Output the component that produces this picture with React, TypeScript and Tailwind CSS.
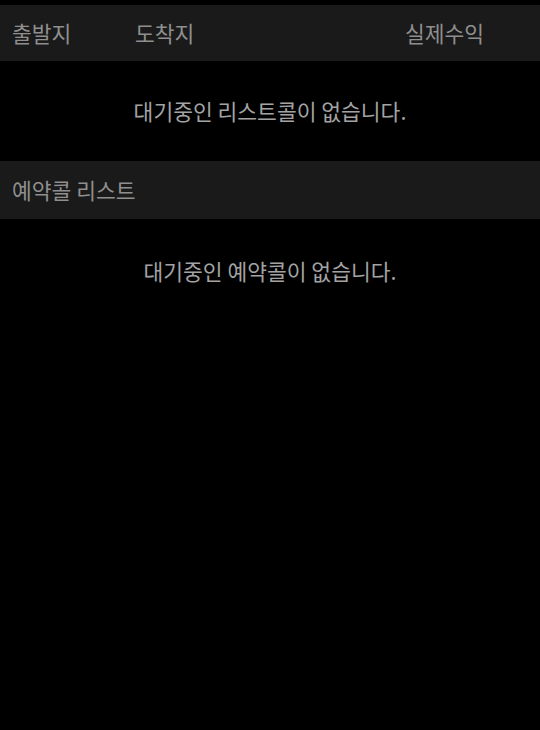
import React from 'react';

const font = { fontFamily: '"Noto Sans CJK KR", "Noto Sans", sans-serif' };

const App: React.FC = () => {
  return (
    <div className="w-[540px] h-[730px] bg-black pt-[5px]" style={font}>
      {/* List header */}
      <div className="h-[56px] bg-[#1a1a1a] flex items-center text-[21.5px] text-[#8f8f8f]">
        <span className="w-[135px] pl-[12px]">출발지</span>
        <span className="flex-1">도착지</span>
        <span className="w-[135px]">실제수익</span>
      </div>
      <div className="h-[100px] flex items-center justify-center text-[21.5px] text-[#a3a3a3]">
        대기중인 리스트콜이 없습니다.
      </div>

      {/* Reservation list */}
      <div className="h-[58px] bg-[#1a1a1a] flex items-center pl-[12px] text-[21.5px] text-[#8f8f8f]">
        예약콜 리스트
      </div>
      <div className="h-[104px] flex items-center justify-center text-[21.5px] text-[#a3a3a3]">
        대기중인 예약콜이 없습니다.
      </div>
    </div>
  );
};

export default App;
